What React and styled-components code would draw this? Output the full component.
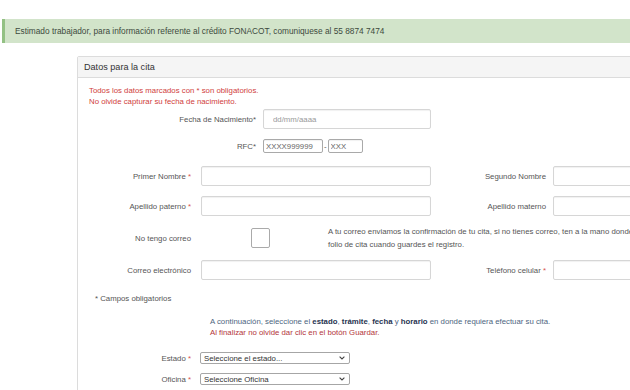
import React from 'react';
import styled, { createGlobalStyle } from 'styled-components';

const GlobalStyle = createGlobalStyle`
  html, body {
    margin: 0;
    padding: 0;
    background: #fff;
    overflow: hidden;
  }
  body {
    font-family: "Liberation Sans", Arial, sans-serif;
    font-size: 7.8px;
    color: #555;
  }
  * { box-sizing: border-box; }
`;

const Page = styled.div`
  width: 630px;
  height: 390px;
  padding-top: 19px;
  overflow: hidden;
`;

const Banner = styled.div`
  display: flex;
  align-items: center;
  height: 24px;
  margin-left: 2px;
  padding-left: 10px;
  background: #d2e4ca;
  border-left: 3px solid #93c184;
  color: #3d4a3d;
  font-size: 8.3px;
  white-space: nowrap;
`;

const Panel = styled.div`
  margin: 13px 0 0 77px;
  width: 720px;
  height: 400px;
  border: 1px solid #dcdcdc;
  border-radius: 2px;
`;

const PanelHeader = styled.div`
  display: flex;
  align-items: center;
  height: 21px;
  padding-left: 6px;
  background: #f5f5f5;
  border-bottom: 1px solid #dcdcdc;
  color: #333;
  font-size: 9.1px;
`;

const PanelBody = styled.div`
  padding-top: 7px;
`;

const Notes = styled.div`
  padding-left: ${p => p.$indent || 11}px;
  color: ${p => p.$color || '#d0403c'};
  line-height: 11px;
  margin-bottom: ${p => p.$after || 0}px;
  margin-top: ${p => p.$before || 0}px;
  white-space: nowrap;

  b {
    color: #1f3350;
  }
`;

const Row = styled.div`
  display: grid;
  grid-template-columns: ${p => p.$cols};
  align-items: center;
  height: ${p => p.$h || 20}px;
  margin-top: ${p => p.$top || 0}px;
`;

const Label = styled.div`
  text-align: right;
  color: #555;
  white-space: nowrap;
`;

const Req = styled.span`
  color: #d9534f;
`;

const Input = styled.input`
  display: block;
  width: ${p => p.$w || 230}px;
  height: ${p => p.$h || 20}px;
  margin: 0;
  padding: 0 0 0 ${p => p.$pl || 6}px;
  border: 1px solid ${p => p.$dark ? '#a9a9a9' : '#d6d6d6'};
  border-radius: 2px;
  box-shadow: inset 0 1px 1px rgba(0, 0, 0, 0.06);
  font-family: inherit;
  font-size: 7.8px;
  color: #555;
  background: #fff;
  outline: none;

  &::placeholder {
    color: ${p => p.$phColor || '#999'};
  }
`;

const RfcGroup = styled.div`
  display: flex;
  align-items: center;
  gap: 1px;
  color: #555;
`;

const Check = styled.div`
  width: 19px;
  height: 20px;
  margin-left: 50px;
  border: 1px solid #aaa;
  border-radius: 2px;
  background: #fff;
`;

const Hint = styled.div`
  line-height: 13px;
  color: #555;
  white-space: nowrap;
`;

const Select = styled.div`
  display: flex;
  align-items: center;
  justify-content: space-between;
  width: 150px;
  height: 12px;
  padding: 0 4px 0 3px;
  border: 1px solid #a6a6a6;
  border-radius: 2px;
  background: #fff;
  color: #333;
  font-size: 7.8px;
  white-space: nowrap;
`;

const Chevron = () => (
  <svg width="6" height="4" viewBox="0 0 6 4">
    <path d="M0.6 0.6 L3 3 L5.4 0.6" fill="none" stroke="#444" strokeWidth="1.1" />
  </svg>
);

const nameCols = '113px 10px 230px 115px 7px 150px';

export default function App() {
  return (
    <Page>
      <GlobalStyle />
      <Banner>
        Estimado trabajador, para información referente al crédito FONACOT, comuniquese al 55 8874 7474
      </Banner>

      <Panel>
        <PanelHeader>Datos para la cita</PanelHeader>
        <PanelBody>
          <Notes $after={2}>
            Todos los datos marcados con * son obligatorios.<br />
            No olvide capturar su fecha de nacimiento.
          </Notes>

          <Row $cols="178px 7px 168px">
            <Label>Fecha de Nacimiento*</Label>
            <span />
            <Input $w={168} $pl={9} placeholder="dd/mm/aaaa" />
          </Row>

          <Row $cols="178px 7px auto" $h={14} $top={10}>
            <Label>RFC*</Label>
            <span />
            <RfcGroup>
              <Input $w={60} $h={14} $pl={2} $dark $phColor="#666" placeholder="XXXX999999" />
              <span>-</span>
              <Input $w={35} $h={14} $pl={2} $dark $phColor="#666" placeholder="XXX" />
            </RfcGroup>
          </Row>

          <Row $cols={nameCols} $top={13}>
            <Label>Primer Nombre <Req>*</Req></Label>
            <span />
            <Input />
            <Label>Segundo Nombre</Label>
            <span />
            <Input $w={150} />
          </Row>

          <Row $cols={nameCols} $top={10}>
            <Label>Apellido paterno <Req>*</Req></Label>
            <span />
            <Input />
            <Label>Apellido materno</Label>
            <span />
            <Input $w={150} />
          </Row>

          <Row $cols="113px 10px 127px auto" $h={26} $top={9}>
            <Label>No tengo correo</Label>
            <span />
            <Check />
            <Hint>
              A tu correo enviamos la confirmación de tu cita, si no tienes correo, ten a la mano donde anotar el<br />
              folio de cita cuando guardes el registro.
            </Hint>
          </Row>

          <Row $cols={nameCols} $top={9}>
            <Label>Correo electrónico</Label>
            <span />
            <Input />
            <Label>Teléfono celular <Req>*</Req></Label>
            <span />
            <Input $w={150} />
          </Row>

          <Notes $indent={17} $color="#555" $before={13}>
            * Campos obligatorios
          </Notes>

          <Notes $indent={132} $color="#4d6580" $before={12}>
            A continuación, seleccione el <b>estado</b>, <b>trámite</b>, <b>fecha</b> y <b>horario</b> en donde requiera efectuar su cita.
          </Notes>
          <Notes $indent={132} $color="#b3363a">
            Al finalizar no olvide dar clic en el botón Guardar.
          </Notes>

          <Row $cols="113px 9px auto" $h={12} $top={14}>
            <Label>Estado <Req>*</Req></Label>
            <span />
            <Select>Seleccione el estado...<Chevron /></Select>
          </Row>

          <Row $cols="113px 9px auto" $h={12} $top={9}>
            <Label>Oficina <Req>*</Req></Label>
            <span />
            <Select>Seleccione Oficina<Chevron /></Select>
          </Row>
        </PanelBody>
      </Panel>
    </Page>
  );
}
